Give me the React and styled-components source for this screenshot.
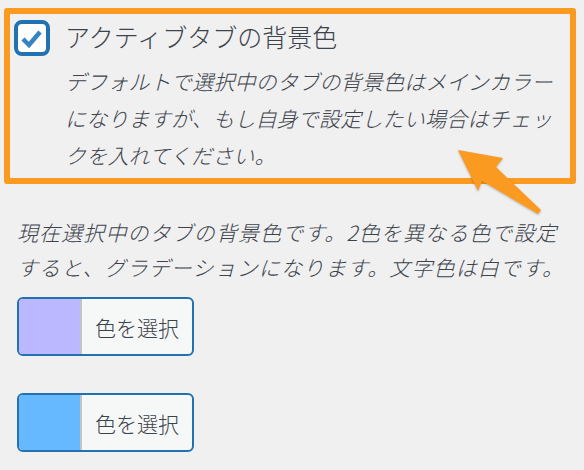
import React from "react";
import styled, { createGlobalStyle } from "styled-components";

const GlobalStyle = createGlobalStyle`
  body {
    margin: 0;
    background: #f0f0f1;
    font-family: "Noto Sans CJK JP", "Noto Sans", sans-serif;
    color: #3c434a;
  }
`;

const Page = styled.div`
  position: relative;
  width: 584px;
  height: 470px;
  overflow: hidden;
  padding-top: 8px;
  box-sizing: border-box;
`;

const Highlight = styled.div`
  display: flex;
  gap: 15px;
  width: 572px;
  height: 176px;
  margin-left: 4px;
  box-sizing: border-box;
  border: 6px solid #fb9a20;
  border-radius: 3px;
  padding: 6px 0 0 4px;
`;

const CheckBox = styled.div`
  flex: none;
  width: 36px;
  height: 36px;
  box-sizing: border-box;
  border: 4px solid #2271b1;
  border-radius: 8px;
  background: #fff;
  display: flex;
  align-items: center;
  justify-content: center;
`;

const TextCol = styled.div`
  display: flex;
  flex-direction: column;
`;

const Title = styled.div`
  font-size: 25px;
  line-height: 36px;
  font-weight: 300;
  margin-top: -2px;
  color: #3c434a;
`;

const Desc = styled.p`
  margin: ${(p) => p.$margin || "0"};
  font-size: 21px;
  line-height: ${(p) => p.$lh || "37px"};
  letter-spacing: ${(p) => p.$ls || "0.2px"};
  font-style: italic;
  font-weight: 300;
  white-space: nowrap;
  color: #3c434a;
`;

const Section = styled.div`
  display: flex;
  flex-direction: column;
  align-items: flex-start;
  padding: 31px 0 0 17px;
`;

const ColorButton = styled.div`
  display: flex;
  width: 177px;
  height: 59px;
  box-sizing: border-box;
  border: 2px solid #2271b1;
  border-radius: 6px;
  background: #f6f7f7;
  overflow: hidden;
  margin-top: ${(p) => p.$top};
`;

const Swatch = styled.div`
  width: 61px;
  flex: none;
  background: ${(p) => p.$color};
  border-right: 2px solid #c3c4c7;
`;

const ButtonLabel = styled.span`
  flex: 1;
  display: flex;
  align-items: center;
  justify-content: center;
  font-size: 21px;
  font-weight: 300;
  color: #3c434a;
`;

const Arrow = styled.svg`
  position: absolute;
  left: 450px;
  top: 140px;
  filter: drop-shadow(0 1px 1px rgba(0, 0, 0, 0.25));
`;

export default function App() {
  return (
    <Page>
      <GlobalStyle />
      <Highlight>
        <CheckBox>
          <svg width="28" height="28" viewBox="0 0 28 28">
            <path
              d="M5 15 L11 21 L22 8"
              fill="none"
              stroke="#3582c4"
              strokeWidth="4.5"
              strokeLinecap="butt"
              strokeLinejoin="miter"
            />
          </svg>
        </CheckBox>
        <TextCol>
          <Title>アクティブタブの背景色</Title>
          <Desc $margin="9px 0 0 0">
            デフォルトで選択中のタブの背景色はメインカラー
            <br />
            になりますが、もし自身で設定したい場合はチェッ
            <br />
            クを入れてください。
          </Desc>
        </TextCol>
      </Highlight>
      <Section>
        <Desc $lh="35px" $ls="1.1px">
          現在選択中のタブの背景色です。2色を異なる色で設定
          <br />
          すると、グラデーションになります。文字色は白です。
        </Desc>
        <ColorButton $top="12px">
          <Swatch $color="#bbb8ff" />
          <ButtonLabel>色を選択</ButtonLabel>
        </ColorButton>
        <ColorButton $top="37px">
          <Swatch $color="#66b8ff" />
          <ButtonLabel>色を選択</ButtonLabel>
        </ColorButton>
      </Section>
      <Arrow width="100" height="80" viewBox="450 140 100 80">
        <polygon
          points="458,150 503,158 496,167 541,210 538,214 482,181 478,191"
          fill="#fb9a20"
        />
      </Arrow>
    </Page>
  );
}
